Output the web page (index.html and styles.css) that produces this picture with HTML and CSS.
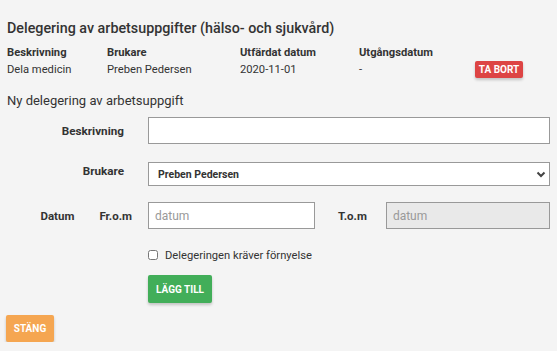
FILE: index.html
```html
<!DOCTYPE html>
<html lang="sv">
<head>
    <meta charset="UTF-8">
    <meta name="viewport" content="width=device-width, initial-scale=1.0">
    <title>Delegering av arbetsuppgifter</title>
    <link rel="stylesheet" href="styles.css">
</head>
<body>

    <h1 class="title">Delegering av arbetsuppgifter (hälso- och sjukvård)</h1>

    <div class="list">
        <div class="list-row list-head">
            <span>Beskrivning</span>
            <span>Brukare</span>
            <span>Utfärdat datum</span>
            <span>Utgångsdatum</span>
            <span></span>
        </div>
        <div class="list-row">
            <span>Dela medicin</span>
            <span>Preben Pedersen</span>
            <span>2020-11-01</span>
            <span>-</span>
            <span><button class="btn btn-red">TA BORT</button></span>
        </div>
    </div>

    <h2 class="subtitle">Ny delegering av arbetsuppgift</h2>

    <form class="form">
        <div class="form-row row-text">
            <label class="form-label">Beskrivning</label>
            <input class="field field-tall" type="text">
        </div>

        <div class="form-row row-select">
            <label class="form-label label-top">Brukare</label>
            <div class="select-wrap">
                <select class="field field-select">
                    <option>Preben Pedersen</option>
                </select>
                <!-- chevron drawn on top of the select -->
                <svg class="chevron" width="10" height="7" viewBox="0 0 10 7">
                    <path d="M1.5 1.5 L5 5 L8.5 1.5" fill="none" stroke="#444" stroke-width="2"/>
                </svg>
            </div>
        </div>

        <div class="form-row row-date">
            <div class="form-label form-label-split">
                <span>Datum</span>
                <span>Fr.o.m</span>
            </div>
            <div class="date-row">
                <input class="field field-tall field-date" type="text" placeholder="datum">
                <span class="to-label">T.o.m</span>
                <input class="field field-tall field-disabled" type="text" placeholder="datum" disabled>
            </div>
        </div>

        <div class="form-row row-check">
            <span></span>
            <label class="check">
                <input type="checkbox">
                <span>Delegeringen kräver förnyelse</span>
            </label>
        </div>

        <div class="form-row row-submit">
            <span></span>
            <div><button type="button" class="btn btn-green">LÄGG TILL</button></div>
        </div>
    </form>

    <button class="btn btn-orange">STÄNG</button>

</body>
</html>
```

FILE: styles.css
```css
body {
    font-family: 'Roboto', 'Liberation Sans', sans-serif;
    margin: 0;
    padding: 0 7px;
    background-color: #f4f4f4;
    color: #333;
}

.title {
    font-size: 14.3px;
    font-weight: 500;
    margin: 18px 0 6px;
    line-height: 20px;
}

.list {
    font-size: 11.2px;
}

.list-row {
    display: grid;
    grid-template-columns: 100px 133px 119px 116px auto;
    align-items: center;
    height: 17px;
}

.list-head {
    font-weight: 700;
}

.subtitle {
    font-size: 13px;
    font-weight: 400;
    margin: 14px 0 7px;
    line-height: 18px;
}

.form-row {
    display: grid;
    grid-template-columns: 141px 1fr;
    align-items: center;
    font-size: 11.7px;
}

.row-text {
    margin-bottom: 18px;
}

.row-select {
    margin-bottom: 16px;
}

.row-date {
    margin-bottom: 21px;
}

.row-check {
    margin-bottom: 15px;
}

.row-submit {
    margin-bottom: 12px;
}

.form-label {
    font-weight: 700;
    text-align: right;
    padding-right: 24px;
    line-height: 14px;
}

.label-top {
    align-self: start;
    padding-top: 2px;
}

.form-label-split {
    display: flex;
    justify-content: flex-end;
    gap: 25px;
    padding-right: 16px;
    font-size: 11.5px;
}

.field {
    box-sizing: border-box;
    border: 1px solid #999;
    background: #fff;
    font-family: inherit;
    font-size: 12px;
    color: #333;
    width: 100%;
    margin: 0;
    padding: 0 6px;
    border-radius: 0;
    outline: none;
    display: block;
}

.field-tall {
    height: 27px;
}

.field::placeholder {
    color: #999;
}

.select-wrap {
    position: relative;
}

.field-select {
    -webkit-appearance: none;
    appearance: none;
    height: 24px;
    font-size: 10.5px;
    font-weight: 700;
    padding-left: 9px;
}

.chevron {
    position: absolute;
    right: 4px;
    top: 9px;
}

.date-row {
    display: flex;
    align-items: center;
}

.field-date {
    width: 167px;
}

.to-label {
    font-weight: 700;
    font-size: 11.5px;
    margin: 0 19px 0 23px;
}

.field-disabled {
    flex: 1;
    background: #e9e9e9;
}

.check {
    display: flex;
    align-items: center;
    gap: 7px;
    font-size: 11.2px;
    height: 10px;
}

.check input {
    margin: 0;
    width: 10px;
    height: 10px;
}

.btn {
    font-family: inherit;
    font-weight: 700;
    color: #fff;
    border: none;
    border-radius: 2px;
    box-shadow: 0 2px 3px rgba(0, 0, 0, 0.2);
    cursor: pointer;
    display: block;
}

.btn-red {
    background-color: #dd4444;
    font-size: 10px;
    height: 17px;
    width: 48px;
    padding: 0;
}

.btn-green {
    background-color: #42ae59;
    font-size: 10px;
    height: 28px;
    width: 64px;
    padding: 0;
}

.btn-orange {
    background-color: #f5a651;
    font-size: 10px;
    height: 27px;
    width: 48px;
    padding: 0;
    margin-left: -1px;
}
```
